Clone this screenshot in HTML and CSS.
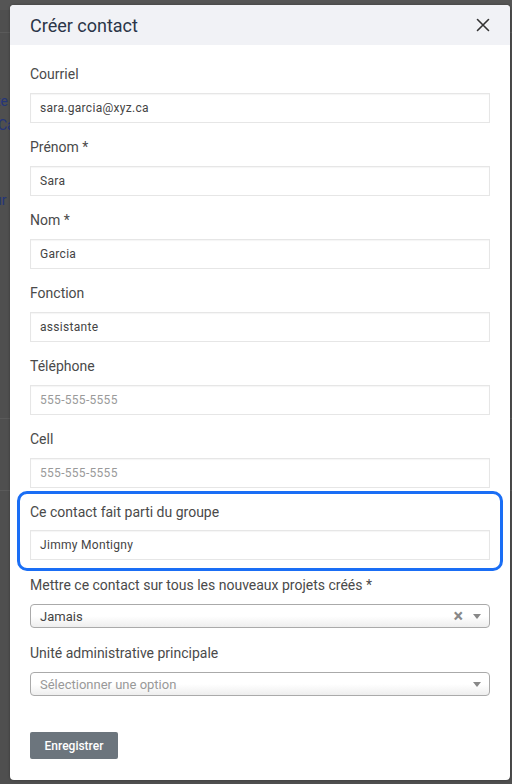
FILE: index.html
```html
<!DOCTYPE html>
<html lang="fr">
<head>
<meta charset="utf-8">
<title>Créer contact</title>
<link rel="stylesheet" href="styles.css">
</head>
<body>
<div class="backdrop">
  <div class="bg-band bg-top"></div>
  <span class="bg-text t1">te</span>
  <span class="bg-text t2">Ca</span>
  <span class="bg-text t3">ur</span>
  <div class="bg-line l1"></div>
  <div class="bg-line l2"></div>
  <div class="bg-line l3"></div>

  <div class="modal">
    <div class="modal-header">
      <h1 class="modal-title">Créer contact</h1>
      <svg class="close" width="14" height="14" viewBox="0 0 14 14"><path d="M1.5 1.5L12.5 12.5M12.5 1.5L1.5 12.5" stroke="#333" stroke-width="1.6" stroke-linecap="round"/></svg>
    </div>
    <div class="modal-body">
      <div class="field">
        <div class="label">Courriel</div>
        <div class="input">sara.garcia@xyz.ca</div>
      </div>
      <div class="field">
        <div class="label">Prénom *</div>
        <div class="input">Sara</div>
      </div>
      <div class="field">
        <div class="label">Nom *</div>
        <div class="input">Garcia</div>
      </div>
      <div class="field">
        <div class="label">Fonction</div>
        <div class="input">assistante</div>
      </div>
      <div class="field">
        <div class="label">Téléphone</div>
        <div class="input placeholder">555-555-5555</div>
      </div>
      <div class="field">
        <div class="label">Cell</div>
        <div class="input placeholder">555-555-5555</div>
      </div>
      <div class="field group">
        <div class="label">Ce contact fait parti du groupe</div>
        <div class="input">Jimmy Montigny</div>
      </div>
      <div class="field sel-field">
        <div class="label">Mettre ce contact sur tous les nouveaux projets créés *</div>
        <div class="select">
          <span class="sel-text">Jamais</span>
          <span class="sel-clear">×</span>
          <span class="sel-arrow"></span>
        </div>
      </div>
      <div class="field sel-field">
        <div class="label">Unité administrative principale</div>
        <div class="select">
          <span class="sel-text placeholder">Sélectionner une option</span>
          <span class="sel-arrow"></span>
        </div>
      </div>
      <button class="btn">Enregistrer</button>
    </div>
  </div>
</div>
</body>
</html>
```
FILE: styles.css
```css
* { box-sizing: border-box; }
html, body { margin: 0; padding: 0; }
body {
  font-family: Roboto, "Liberation Sans", Arial, sans-serif;
  width: 512px;
  height: 784px;
  overflow: hidden;
}
.backdrop {
  position: relative;
  width: 512px;
  height: 784px;
  background: #4f4f4f;
}
.bg-band { position: absolute; left: 0; right: 0; }
.bg-top { top: 0; height: 10px; background: #555555; }
.bg-line { position: absolute; left: 0; right: 0; height: 1px; background: #5a5a5a; }
.l1 { top: 32px; }
.l2 { top: 418px; }
.l3 { top: 490px; }
.bg-text {
  position: absolute;
  font-size: 14px;
  color: #25357a;
}
.t1 { left: -4px; top: 93px; }
.t2 { left: -2px; top: 117px; }
.t3 { left: -6px; top: 192px; }

.modal {
  position: absolute;
  left: 10px;
  top: 5px;
  width: 500px;
  height: 775px;
  background: #fff;
  border-radius: 4px;
  overflow: hidden;
  box-shadow: 0 0 3px rgba(0,0,0,0.3);
}
.modal-header {
  height: 40px;
  background: #f1f2f6;
  display: flex;
  align-items: center;
  justify-content: space-between;
  padding: 0 20px;
}
.modal-title {
  margin: 0;
  font-size: 18px;
  font-weight: 400;
  color: #2b3548;
}
.close { display: block; }

.modal-body {
  padding: 19px 20px 0;
  display: flex;
  flex-direction: column;
}
.field { display: flex; flex-direction: column; margin-bottom: 14px; }
.label {
  font-size: 14px;
  line-height: 20px;
  color: #4a4a4a;
  margin-bottom: 9px;
}
.input {
  height: 30px;
  border: 1px solid #e6e6e6;
  box-shadow: inset 0 1px 1px rgba(0,0,0,0.04);
  padding: 0 9px;
  display: flex;
  align-items: center;
  font-size: 12px;
  letter-spacing: 0.3px;
  color: #444;
}
.input.placeholder { color: #9a9a9a; }

.group {
  margin: -11px -13px 4px;
  padding: 8px 10px 8px;
  border: 3px solid #1a6ef5;
  border-radius: 10px;
}
.group .label { margin-bottom: 8px; }

.sel-field { margin-bottom: 15px; }
.select {
  height: 24px;
  border: 1px solid #aaa;
  border-radius: 4px;
  background: linear-gradient(to bottom, #fff 50%, #eee 100%);
  display: flex;
  align-items: center;
  padding: 0 8px 0 9px;
  font-size: 13px;
  color: #444;
}
.sel-text { flex: 1; }
.sel-text.placeholder { color: #999; }
.sel-clear {
  font-size: 18px;
  font-weight: 700;
  color: #888;
  margin-right: 10px;
  line-height: 1;
}
.sel-arrow {
  width: 0;
  height: 0;
  border-left: 4px solid transparent;
  border-right: 4px solid transparent;
  border-top: 5px solid #888;
}

.btn {
  align-self: flex-start;
  margin-top: 21px;
  width: 88px;
  height: 27px;
  background: #6c757d;
  color: #fff;
  border: none;
  border-radius: 2px;
  font-family: Roboto, "Liberation Sans", Arial, sans-serif;
  font-size: 12px;
  font-weight: 500;
  padding: 0;
}
```
